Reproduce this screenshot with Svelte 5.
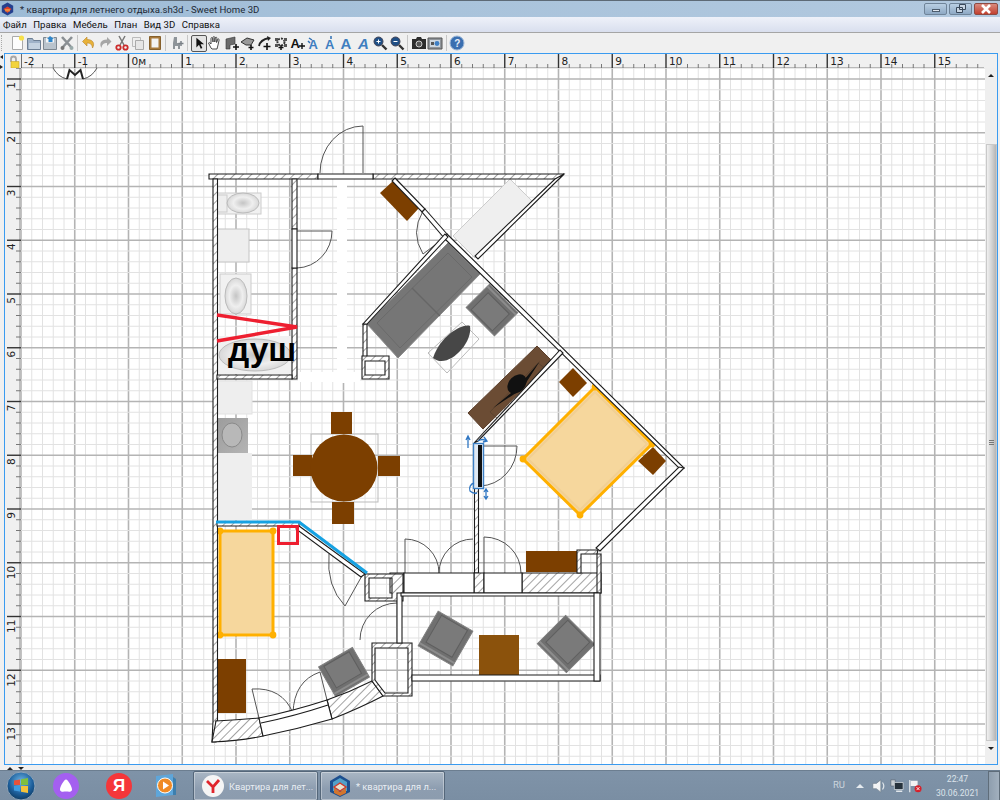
<script>
  // Sweet Home 3D window: title, menu, toolbar, plan canvas with rulers, then the Win7 taskbar.
  // The plan is a free canvas, so its svg viewBox simply uses page pixels.
  const M = 53.75;
  const STEP = M / 5;
  const X0 = 21; // x of -2 m
  const Y0 = 24.25; // y of 0 m

  const menus = ['Файл', 'Правка', 'Мебель', 'План', 'Вид 3D', 'Справка'];

  const gridX = Array.from({ length: 90 }, (_, i) => ({ p: X0 + i * STEP, major: i % 5 === 0 }));
  const gridY = Array.from({ length: 65 }, (_, i) => ({ p: Y0 + (i + 4) * STEP, major: (i + 4) % 5 === 0 }));

  const rulerX = Array.from({ length: 18 }, (_, i) => ({ p: X0 + i * M, label: i === 2 ? '0м' : String(i - 2) }));
  const rulerY = Array.from({ length: 13 }, (_, i) => ({ p: Y0 + (i + 1) * M, label: String(i + 1) }));

  const chairs = [
    { x: 445.5, y: 637.5, w: 40, h: 40, a: 30 },
    { x: 566, y: 643, w: 41, h: 40, a: 45 },
    { x: 344, y: 671, w: 39, h: 34, a: -30 },
    { x: 492, y: 309, w: 40, h: 33, a: 225 }
  ];
  const brown = [
    [331, 411, 21, 22],
    [293, 454, 19, 21],
    [378, 455, 22, 20],
    [332, 501, 22, 22],
    [526, 550, 51, 21],
    [217, 658, 29, 54]
  ];
</script>

<div class="app">
  <div class="title">
    <svg class="logo" viewBox="0 0 16 16">
      <path d="M8 0 15 4v8l-7 4-7-4V4z" fill="#25408f" />
      <path d="M8 5l5 3-5 5-5-5z" fill="#e0402a" />
      <path d="M5 8h6v3H5z" fill="#f08a3c" />
    </svg>
    <span class="title-text">* квартира для летнего отдыха.sh3d - Sweet Home 3D</span>
    <div class="winbtns">
      <div class="wb"><i class="min"></i></div>
      <div class="wb">
        <svg width="12" height="10" viewBox="0 0 12 10"><path d="M4.5.5h6v5h-6zM1.5 3.5h6v5h-6z" fill="#c9d6e3" stroke="#39485a" /></svg>
      </div>
      <div class="wb close">
        <svg width="12" height="10" viewBox="0 0 12 10"><path d="M2 1l8 8M10 1 2 9" stroke="#fff" stroke-width="2.6" /></svg>
      </div>
    </div>
  </div>

  <div class="menu">
    {#each menus as m}<span>{m}</span>{/each}
  </div>

  <div class="toolbar">
    <div class="grip"></div>
    <svg class="ic" viewBox="0 0 16 16"><path d="M3.5 1.5h8l2 2v11h-10z" fill="#fdfdfd" stroke="#aaa" /><circle cx="12.5" cy="3" r="2.6" fill="#f7e04a" /></svg>
    <svg class="ic" viewBox="0 0 16 16"><path d="M1.5 3.5h5l1 2h7v9h-13z" fill="#9fb2c8" stroke="#6d7f94" /><path d="M3 8h11v6H3z" fill="#c4d2e0" /></svg>
    <svg class="ic" viewBox="0 0 16 16"><path d="M1.5 2.5h13v12h-13z" fill="#b9c3cc" stroke="#7d8790" /><path d="M4 2.5h8v5H4z" fill="#f4f6f8" /><path d="M8 1l4 3-1.5 0v3h-4V4H5z" fill="#2f86c9" /></svg>
    <svg class="ic" viewBox="0 0 16 16"><path d="M3 2l10 11M13 2 3 13" stroke="#8b9094" stroke-width="2.6" /><circle cx="3.5" cy="13" r="2" fill="#777" /><circle cx="12.5" cy="13" r="2" fill="#9aa" /></svg>
    <i class="sep"></i>
    <svg class="ic" viewBox="0 0 16 16"><path d="M6 2 1.5 6.5 6 11V8c3 0 5 1 5.500 5 2.500-4 1-8.500-5.500-8.500z" fill="#e8b23a" stroke="#b9852a" stroke-width=".6" /></svg>
    <svg class="ic" viewBox="0 0 16 16"><path d="M10 2l4.500 4.500L10 11V8c-3 0-5 1-5.500 5C2 9 3.500 4.500 10 4.500z" fill="#a6a6a6" /></svg>
    <svg class="ic" viewBox="0 0 16 16"><path d="M5 1l5 9M11 1 6 10" stroke="#777" stroke-width="1.5" /><circle cx="4.500" cy="12.500" r="2.200" fill="none" stroke="#cc2b2b" stroke-width="1.800" /><circle cx="11.500" cy="12.500" r="2.200" fill="none" stroke="#cc2b2b" stroke-width="1.800" /></svg>
    <svg class="ic" viewBox="0 0 16 16"><path d="M2.500 2.500h8v9h-8z" fill="#eee" stroke="#bbb" /><path d="M5.500 5.500h8v9h-8z" fill="#e6e6e6" stroke="#aaa" /></svg>
    <svg class="ic" viewBox="0 0 16 16"><path d="M2.500 1.500h11v13h-11z" fill="#a87a3c" stroke="#86602c" /><path d="M4.500 3.500h7v9h-7z" fill="#f3f3f3" /></svg>
    <i class="sep"></i>
    <svg class="ic" viewBox="0 0 16 16"><path d="M5 2h3v6h3v6H9v-3H6v3H4V8z" fill="#8e9499" /><path d="M12 6v5M9.500 8.500h5" stroke="#7a8086" stroke-width="1.500" /></svg>
    <i class="sep"></i>
    <div class="active">
      <svg class="ic" viewBox="0 0 16 16"><path d="M5 2v11l3-3 2 4.500 1.800-.8-2-4.300h4z" fill="#111" /></svg>
    </div>
    <svg class="ic" viewBox="0 0 16 16"><path d="M4 13 1.500 8c.8-1 1.800 0 2.500 1V3.500c0-1.200 1.600-1.200 1.700 0L6 7V2.500c0-1.200 1.800-1.200 1.800 0V7l.4-4c.2-1.100 1.800-1 1.700.2L9.600 7.500l1-3c.4-1 1.800-.6 1.500.5L11 10l-1 4H5z" fill="#fff" stroke="#222" stroke-width=".8" /></svg>
    <svg class="ic" viewBox="0 0 16 16"><path d="M2 4l9-2v7l-5 1v4H2z" fill="#6b6b6b" stroke="#333" stroke-width=".6" /><path d="M12 9v6M9 12h6" stroke="#111" stroke-width="1.600" /></svg>
    <svg class="ic" viewBox="0 0 16 16"><path d="M1 7l6-4 7 2-3 5H6z" fill="#999" stroke="#333" stroke-width="1" /><path d="M11 10v5M8.500 12.500h5" stroke="#111" stroke-width="1.600" /></svg>
    <svg class="ic" viewBox="0 0 16 16"><path d="M2 11C3 6 7 4 12 3" fill="none" stroke="#222" stroke-width="1.800" /><path d="M10 1l4 2-3 3z" fill="#222" /><path d="M10 8v7M6.500 11.500h7" stroke="#111" stroke-width="1.600" /></svg>
    <svg class="ic" viewBox="0 0 16 16"><circle cx="8" cy="7" r="3.500" fill="none" stroke="#333" stroke-width="2" stroke-dasharray="2 1.200" /><path d="M2 3h3v3H2zM11 3h3v3h-3zM2 9h3v3H2zM11 9h3v3h-3z" fill="#555" /><path d="M8 10v5M5.500 12.500h5" stroke="#111" stroke-width="1.500" /></svg>
    <svg class="ic" viewBox="0 0 16 16"><text x="0.500" y="13" class="ta">A</text><path d="M12 8v6M9 11h6" stroke="#111" stroke-width="1.400" /></svg>
    <svg class="ic" viewBox="0 0 16 16"><text x="2.500" y="14" class="tb-a small">A</text><path d="M3 3l3 2M2 6l2 2" stroke="#2f6fb3" stroke-width="1.500" /></svg>
    <svg class="ic" viewBox="0 0 16 16"><text x="2" y="14" class="tb-a small">A</text><path d="M8 1v3" stroke="#2f6fb3" stroke-width="1.500" /></svg>
    <svg class="ic" viewBox="0 0 16 16"><text x="1.500" y="14" class="tb-a">A</text></svg>
    <svg class="ic" viewBox="0 0 16 16"><text x="2" y="14" class="tb-a ital">A</text></svg>
    <svg class="ic" viewBox="0 0 16 16"><circle cx="6.500" cy="6.500" r="4.500" fill="#1f4f86" stroke="#445" /><path d="M4.500 6.500h4M6.500 4.500v4" stroke="#fff" /><path d="M10 10l4.500 4.500" stroke="#333" stroke-width="2.400" /></svg>
    <svg class="ic" viewBox="0 0 16 16"><circle cx="6.500" cy="6.500" r="4.500" fill="#1f4f86" stroke="#445" /><path d="M4.500 6.500h4" stroke="#fff" /><path d="M10 10l4.500 4.500" stroke="#333" stroke-width="2.400" /></svg>
    <i class="sep"></i>
    <svg class="ic" viewBox="0 0 16 16"><path d="M1 4h4l1-2h4l1 2h4v10H1z" fill="#2c2c2c" /><circle cx="8" cy="9" r="3" fill="#555" stroke="#ccc" /></svg>
    <svg class="ic" viewBox="0 0 16 16"><path d="M1 3h14v11H1z" fill="#8f949a" stroke="#555" /><path d="M3 5h10v7H3z" fill="#cdd6df" /><circle cx="10" cy="8.500" r="2.400" fill="#3f7fc4" /><path d="M4 7h3v3H4z" fill="#555" /></svg>
    <i class="sep"></i>
    <svg class="ic" viewBox="0 0 16 16"><circle cx="8" cy="8" r="7" fill="#3a6fb0" stroke="#9db8d8" /><text x="5.200" y="12" class="help">?</text></svg>
  </div>

  <div class="row">
    <div class="divider">
      <span class="tri left"></span>
      <span class="tri right"></span>
    </div>
    <div class="work">
      <div class="corner">
        <svg width="15" height="14" viewBox="5 53 15 14">
          <path d="M11 61v-3a2.500 2.500 0 0 1 5 0v3" fill="none" stroke="#a6a6a6" stroke-width="1.800" />
          <path d="M11 60.500h8V67h-8z" fill="#f2d33c" stroke="#c8a828" stroke-width=".6" />
        </svg>
      </div>

      <svg class="ruler-x" viewBox="21 53 976 14" width="976" height="14">
        <path d="M21 66.500H984" stroke="#b9b9b9" />
        {#each gridX as g}
          {#if !g.major && g.p < 984}<path d="M{g.p} 63V67" stroke="#777" />{/if}
        {/each}
        {#each rulerX as r}
          <path d="M{r.p} 53V67" stroke="#333" stroke-width="1.400" />
          <text x={r.p + 3} y="64" class="rl">{r.label}</text>
        {/each}
      </svg>

      <svg class="ruler-y" viewBox="5 67 16 696" width="16" height="696">
        <rect x="19" y="67" width="2" height="696" fill="#bdbdbd" />
        {#each gridY as g}
          {#if !g.major}<path d="M16 {g.p}H21" stroke="#777" />{/if}
        {/each}
        {#each rulerY as r}
          <path d="M7 {r.p}H21" stroke="#333" stroke-width="1.400" />
          <text transform="translate(15 {r.p + 3}) rotate(-90)" text-anchor="end" class="rl">{r.label}</text>
        {/each}
      </svg>

      <svg class="plan" viewBox="21 67 964 696" width="964" height="696">
        <defs>
          <pattern id="hatch" width="6" height="6" patternUnits="userSpaceOnUse" patternTransform="rotate(-45)">
            <rect width="6" height="6" fill="#fff" />
            <path d="M0 0H6" stroke="#666" stroke-width="1.200" />
          </pattern>
          <radialGradient id="china">
            <stop offset="0" stop-color="#c4c4c4" />
            <stop offset=".6" stop-color="#efefef" />
            <stop offset="1" stop-color="#d8d8d8" />
          </radialGradient>
          <linearGradient id="steel" x1="0" y1="0" x2="1" y2="1">
            <stop offset="0" stop-color="#9c9c9c" />
            <stop offset="1" stop-color="#b4b4b4" />
          </linearGradient>
        </defs>

        <rect x="21" y="67" width="964" height="696" fill="#fff" />
        {#each gridX as g}
          <path d="M{g.p} 67V763" stroke={g.major ? '#b4b4b4' : '#e2e2e2'} stroke-width={g.major ? 1.600 : 1} />
        {/each}
        {#each gridY as g}
          <path d="M21 {g.p}H985" stroke={g.major ? '#b4b4b4' : '#e2e2e2'} stroke-width={g.major ? 1.600 : 1} />
        {/each}

        <!-- erased stripes -->
        <rect x="337" y="178" width="10" height="204" fill="#fff" />
        <rect x="298" y="371" width="62" height="10" fill="#fff" />

        <!-- door arcs -->
        <g class="door">
          <path d="M320 172A43 47 0 0 1 363 125V172" />
          <path d="M297 230H332A36 37 0 0 1 297 267" />
          <path d="M423 210Q410 232 423 253L447 235" />
          <path d="M480 445H517A38 40 0 0 1 480 485" />
          <path d="M329 553Q326 585 345 605L363 573" />
          <path d="M405 572V538A34 34 0 0 1 439 572" />
          <path d="M439 572A34 34 0 0 1 473 538" />
          <path d="M484 572V536A37 36 0 0 1 521 572" />
          <path d="M259 717 252 688Q282 686 293 712" />
          <path d="M293 712Q294 680 320 671L327 699" />
          <path d="M53 67Q58 76 67 78" />
          <path d="M97 67Q92 76 83 78" />
          <path d="M397 602A37 37 0 0 0 360 639" />
        </g>
        <path d="M67 78 69.500 69 75 74 80.500 69 83 78" fill="none" stroke="#222" stroke-width="2" />

        <!-- bathroom -->
        <rect x="217" y="192" width="44" height="21" fill="#f1f1f1" stroke="#ccc" />
        <rect x="217" y="194" width="10" height="17" fill="#eee" stroke="#ccc" />
        <ellipse cx="243" cy="202" rx="16" ry="10" fill="url(#china)" stroke="#bbb" />
        <rect x="217" y="228" width="32" height="33" fill="#eee" stroke="#c4c4c4" />
        <rect x="220" y="273" width="31" height="40" fill="#f1f1f1" stroke="#ccc" />
        <ellipse cx="236" cy="295" rx="11" ry="18" fill="url(#china)" stroke="#bbb" />
        <rect x="218" y="335" width="74" height="38" fill="#f1f1f1" />
        <ellipse cx="255" cy="354" rx="36" ry="16" fill="url(#china)" stroke="#bbb" />

        <!-- kitchen -->
        <rect x="217" y="380" width="35" height="33" fill="#eee" stroke="#e2e2e2" />
        <rect x="217" y="417" width="31" height="35" fill="url(#steel)" />
        <ellipse cx="232" cy="434" rx="10" ry="12" fill="#b8b8b8" stroke="#8a8a8a" />
        <rect x="217" y="452" width="35" height="67" fill="#eee" />

        <!-- dining set -->
        <rect x="311" y="433" width="67" height="68" fill="none" stroke="#bbb" />
        {#each brown as b}
          <rect x={b[0]} y={b[1]} width={b[2]} height={b[3]} fill="#7c3f00" />
        {/each}
        <circle cx="344" cy="467" r="33.500" fill="#7c3f00" />

        <!-- bedroom and living room, rotated pieces -->
        <path d="M380 192 393 180 419 207 407 220z" fill="#7c3f00" />
        <path d="M453 235 510 178 532 200 475 257z" fill="#efefef" stroke="#ccc" />
        <path d="M367 323 448 242 480 273 398 357z" fill="#767676" stroke="#8a8a8a" />
        <path d="M377 322 448 252 472 276 400 347z" fill="none" stroke="#6a6a6a" />
        <path d="M412 287 440 315" stroke="#666" stroke-width="1.500" />
        <path d="M428 352 462 321 479 338 447 372z" fill="none" stroke="#bbb" />
        <path d="M433 357C441 333 464 322 470 325 473 343 447 369 433 357z" fill="#474747" />
        <path d="M468 412 537 345 552 360 483 428z" fill="#6b4c34" stroke="#5b3e2a" />
        <path d="M490 411 538 362 546 368 498 418z" fill="none" stroke="#56402f" stroke-width=".8" />
        <path d="M493 407 517 387 540 360 522 388z" fill="#111" />
        <ellipse cx="517" cy="383" rx="11" ry="8" transform="rotate(-45 517 383)" fill="#111" />
        <path d="M559 381 573 367 587 382 573 396z" fill="#7c3f00" />
        <path d="M638 460 653 446 666 460 653 474z" fill="#7c3f00" />

        <!-- lower room table -->
        <rect x="479" y="634" width="40" height="40" fill="#8b520c" />

        {#each chairs as c}
          <g transform="translate({c.x} {c.y}) rotate({c.a})">
            <rect x={-c.w / 2} y={-c.h / 2} width={c.w} height={c.h} fill="#707070" stroke="#7e7e7e" />
            <rect x={-c.w / 2 + 5} y={-c.h / 2 + 2} width={c.w - 10} height={c.h - 9} fill="#7a7a7a" stroke="#5f5f5f" />
            <path d="M{-c.w / 2} {c.h / 2 - 3}H{c.w / 2}" stroke="#8c8c8c" stroke-width="2" />
          </g>
        {/each}

        <!-- beds -->
        <path d="M595 386 652 443 580 514 523 458z" fill="#f6d79d" stroke="#ffb000" stroke-width="3" />
        <path d="M595 391 647 443 580 509 528 458z" fill="none" stroke="#f1cf94" stroke-width="2" />
        <rect x="220" y="530" width="53" height="104" fill="#f6d79d" stroke="#ffb000" stroke-width="3" />
        {#each [[595, 386], [652, 443], [580, 514], [523, 458], [220, 530], [273, 530], [220, 634], [273, 634]] as d}
          <circle cx={d[0]} cy={d[1]} r="3.400" fill="#ffb000" />
        {/each}

        <!-- walls -->
        <g class="wall">
          <path d="M209 173H318V178H209z" />
          <path d="M373 173H564L559 178H373z" />
          <path d="M213 178H217.500V720H216V741H212L213 720z" />
          <path d="M292 178H297V228H292zM292 267H297V378H292z" />
          <path d="M217 374H292V378H217z" />
          <path d="M474.500 487H478.500V572H474.500z" />
          <path d="M217 521H299V525H217z" />
          <path d="M216 720Q238 719 259 717L263 735Q240 740 212 741z" />
          <path d="M327 699Q350 691 372 680L383 695Q360 707 332 718z" />
          <path d="M390 572H404V592H390z" />
          <path d="M474 572H484V592H474z" />
          <path d="M522 572H601V592H522z" />
          <path fill-rule="evenodd" d="M365 573H403V600H365zM369 577V597H392V577z" />
          <path fill-rule="evenodd" d="M372 642H412V695H383L372 680zM375 647V679L385 692H408V647z" />
          <path d="M363 323H367V356H363z" />
          <path fill-rule="evenodd" d="M362 355H389V378H362zM365 360V374H385V360z" />
          <path d="M577 549H598L597 553H581V572H577z" />
          <path d="M597 553H601V592H597z" />
        </g>
        <g class="wall plain">
          <path d="M318 173H373V178H318z" />
          <path d="M292 228H297V267H292z" />
          <path d="M259 717Q293 710 327 699L332 718Q298 728 263 735z" />
          <path d="M261 722Q295 715 328 704" />
          <path d="M404 572H474V592H404z" />
          <path d="M484 572H522V592H484z" />
          <path d="M564 173 478 258 475 255 555 178z" />
          <path d="M395 177 425 208 422 211 392 180z" />
          <path d="M447 233 684 467 680 468 445 238z" />
          <path d="M425 208 447 233 445 238 422 211z" />
          <path d="M448 236 367 323 363 323 445 233z" />
          <path d="M563 352 478 440 474 442 560 349z" />
          <path d="M684 467 600 550 596 547 679 466z" />
          <path d="M299 525 365 573 361 576 296 528z" />
          <path d="M397 592H402V642H397z" />
          <path d="M412 674H600V680H412z" />
          <path d="M401 592H598V595H401z" />
          <path d="M594 592H600V680H594z" />
        </g>

        <!-- annotations drawn over the plan -->
        <path d="M217 314 297 326 217 340" class="mark" />
        <path d="M216 521H299L367 572" fill="none" stroke="#17a2e2" stroke-width="3.200" />
        <rect x="278.500" y="525.500" width="19" height="17" fill="none" stroke="#ee1f30" stroke-width="3" />
        <text x="228" y="360" class="shower">душ</text>

        <!-- selected door with its handles -->
        <rect x="473.500" y="442.500" width="10" height="45" fill="#dfe9f4" stroke="#3c7fc4" stroke-width="1.400" />
        <rect x="478" y="444" width="4" height="42" fill="#111" />
        <g class="handles">
          <path d="M468 435V447M466 439 468 435 470 439" />
          <path d="M478 440Q483 437 486 440M484 436 487 440 483 441" />
          <path d="M474 482A6 6 0 0 0 470 490Q473 493 477 492" />
          <path d="M486 488V498M484 491 486 488 488 491M484 495 486 498 488 495" />
        </g>
      </svg>

      <div class="scroll">
        <span class="tri up"></span>
        <div class="thumb"><i></i><i></i><i></i></div>
        <span class="tri down"></span>
      </div>
    </div>
  </div>

  <div class="split">
    <span class="tri up"></span>
    <span class="tri down"></span>
  </div>

  <div class="taskbar">
    <svg class="orb" viewBox="0 0 30 30">
      <defs>
        <radialGradient id="orbfill" cx=".5" cy=".35" r=".7">
          <stop offset="0" stop-color="#6fb8e8" />
          <stop offset=".6" stop-color="#1d5f9c" />
          <stop offset="1" stop-color="#0d3558" />
        </radialGradient>
      </defs>
      <circle cx="15" cy="15" r="14" fill="url(#orbfill)" stroke="#8fa4b8" />
      <path d="M8 9.500 14 8.500V14H8z" fill="#e8523a" />
      <path d="M15 8.300 22 7V14H15z" fill="#7fbf3f" />
      <path d="M8 15H14V20.500L8 19.500z" fill="#3f9be0" />
      <path d="M15 15H22V22L15 20.700z" fill="#f5c23a" />
    </svg>
    <svg class="quick alice" viewBox="0 0 26 26">
      <circle cx="13" cy="13" r="13" fill="#a45ff0" />
      <path d="M13 6.500C15 6.500 19.500 14.500 19 17 18.500 19.500 15 18.500 13 18.500S7.500 19.500 7 17C6.500 14.500 11 6.500 13 6.500z" fill="#fff" />
    </svg>
    <div class="quick ya">Я</div>
    <svg class="quick media" viewBox="0 0 26 26">
      <path d="M3 3 20 1V22L3 24z" fill="#5ea6da" />
      <path d="M20 4 23 6V22L20 22z" fill="#3d7fae" />
      <circle cx="12" cy="12.500" r="7.500" fill="#f08a24" stroke="#fff" />
      <path d="M10 8.500 16 12.500 10 16.500z" fill="#fff" />
    </svg>

    <div class="task first">
      <svg class="task-ic" viewBox="0 0 22 22">
        <circle cx="11" cy="11" r="11" fill="#f5f5f5" />
        <path d="M5 6 11 12 17 5M11 12V18" fill="none" stroke="#e0252c" stroke-width="2.800" />
      </svg>
      <span>Квартира для лет...</span>
    </div>
    <div class="task">
      <svg class="task-ic" viewBox="0 0 22 22">
        <path d="M11 0 21 6V17L11 22 1 17V6z" fill="#1d4f8f" />
        <path d="M4 7 11 3 18 7V16H4z" fill="#52a0c8" />
        <path d="M5 12 11 8 17 12 11 16z" fill="#e8e2d0" stroke="#d23a2a" stroke-width="1.400" />
        <path d="M5 13 11 17 17 13V18L11 21 5 18z" fill="#d2752f" />
      </svg>
      <span>* квартира для л...</span>
    </div>

    <div class="tray">
      <span class="lang">RU</span>
      <span class="tray-up"></span>
      <svg class="tr-ic" viewBox="0 0 16 16"><path d="M1 5h4l5-4v14l-5-4H1z" fill="#f1f3f5" stroke="#66737f" stroke-width=".6" /><path d="M12 4q3 4 0 8" fill="none" stroke="#dfe5ea" stroke-width="1.400" /></svg>
      <svg class="tr-ic" viewBox="0 0 16 16"><path d="M1 1h5v7H1z" fill="#c8ced4" stroke="#4b5763" stroke-width=".6" /><path d="M5 4h10v8H5z" fill="#26323c" stroke="#dfe5ea" stroke-width=".8" /><path d="M7 14h7" stroke="#e8ecf0" stroke-width="1.600" /></svg>
      <svg class="tr-ic" viewBox="0 0 16 16"><path d="M2 1v14" stroke="#e4e8ec" stroke-width="1.400" /><path d="M3 2h8v6H3z" fill="#f3f3f3" /><circle cx="11.500" cy="11" r="4" fill="#d6202a" /><path d="M9.800 9.300l3.400 3.400M13.200 9.300l-3.400 3.400" stroke="#fff" /></svg>
      <div class="clock"><span>22:47</span><span>30.06.2021</span></div>
      <div class="desk"></div>
    </div>
  </div>
</div>

<style>
  :global(body) {
    margin: 0;
    background: #f0f0f0;
  }
  .app {
    width: 1000px;
    height: 800px;
    display: flex;
    flex-direction: column;
    overflow: hidden;
    font-family: Roboto, "Noto Sans", sans-serif;
  }
  .title {
    height: 16px;
    flex: none;
    display: flex;
    align-items: center;
    padding-left: 1px;
    border-top: 1px solid #5d6a76;
    background: linear-gradient(90deg, #9dbbd6, #a9c3db 45%, #b2c9df 100%);
  }
  .logo {
    width: 13px;
    height: 14px;
  }
  .title-text {
    margin-left: 6px;
    font-size: 9.6px;
    white-space: nowrap;
    color: #1d2935;
  }
  .winbtns {
    margin-left: auto;
    margin-right: 2px;
    display: flex;
    gap: 2px;
    align-self: flex-start;
  }
  .wb {
    width: 23px;
    height: 12px;
    margin-top: 2px;
    display: flex;
    align-items: center;
    justify-content: center;
    border: 1px solid #6f8499;
    border-radius: 2px;
    box-sizing: border-box;
    background: linear-gradient(#b9cfe3, #8ea9c4);
  }
  .wb.close {
    width: 24px;
    background: linear-gradient(#d98a7e, #c2402f);
    border-color: #8d4a42;
  }
  .wb .min {
    width: 8px;
    height: 3px;
    margin-top: 3px;
    background: #dfe6ee;
    border: 1px solid #4d5d6e;
    box-sizing: border-box;
  }
  .menu {
    height: 15px;
    flex: none;
    display: flex;
    gap: 6.500px;
    padding-left: 3px;
    align-items: center;
    font-size: 9.600px;
    color: #111;
    border-bottom: 1px solid #a5a5a5;
    background: linear-gradient(#eef1f9, #d9dfee);
  }
  .toolbar {
    height: 20px;
    flex: none;
    display: flex;
    align-items: center;
    background: #f0f0f0;
  }
  .grip {
    width: 8px;
    height: 16px;
    margin-left: 1px;
    border-left: 1px dotted #aaa;
    box-sizing: border-box;
  }
  .ic {
    width: 16px;
    height: 16px;
    margin: 0 0.25px;
    flex: none;
  }
  .sep {
    width: 1px;
    height: 16px;
    margin: 0 2.25px;
    background: #c6c6c6;
    flex: none;
  }
  .active {
    display: flex;
    width: 16.500px;
    height: 17px;
    align-items: center;
    justify-content: center;
    border: 1px solid #555;
    border-radius: 2px;
    background: #e4e4e4;
    flex: none;
    box-sizing: border-box;
  }
  .active .ic {
    width: 14px;
    height: 14px;
    margin: 0;
  }
  .ta {
    font: 700 13px "Liberation Sans", sans-serif;
    fill: #111;
  }
  .tb-a {
    font: 700 15px "Liberation Sans", sans-serif;
    fill: #3f7ec0;
  }
  .tb-a.small {
    font-size: 13px;
  }
  .tb-a.ital {
    font-style: italic;
  }
  .help {
    font: 700 10px "Liberation Sans", sans-serif;
    fill: #e8f0fa;
  }
  .row {
    height: 712px;
    flex: none;
    display: flex;
  }
  .divider {
    width: 4px;
    padding-top: 2px;
    display: flex;
    flex-direction: column;
    gap: 6px;
  }
  .work {
    height: 712px;
    width: 994px;
    box-sizing: border-box;
    border: 1px solid #3a9bf0;
    display: grid;
    grid-template-columns: 16px 964px 12px;
    grid-template-rows: 14px 696px;
    background: #f0f0f0;
  }
  .work svg {
    display: block;
  }
  .corner {
    grid-area: 1 / 1;
  }
  .ruler-x {
    grid-column: 2 / 4;
    grid-row: 1;
    width: 976px;
  }
  .ruler-y {
    grid-column: 1;
    grid-row: 2;
  }
  .plan {
    grid-column: 2;
    grid-row: 2;
  }
  .rl {
    font: 10.5px "DejaVu Sans", sans-serif;
    fill: #222;
  }
  .door path {
    fill: none;
    stroke: #555;
    stroke-width: 1;
  }
  .wall path {
    fill: url(#hatch);
    stroke: #1c1c1c;
    stroke-width: 1.100;
  }
  .wall.plain path {
    fill: #fff;
  }
  .mark {
    fill: none;
    stroke: #ee1f30;
    stroke-width: 3.400;
  }
  .shower {
    font: 700 33.500px "Liberation Sans", sans-serif;
    fill: #000;
  }
  .handles path {
    fill: none;
    stroke: #2f76c2;
    stroke-width: 1.300;
  }
  .scroll {
    grid-column: 3;
    grid-row: 2;
    display: flex;
    flex-direction: column;
    align-items: center;
    background: #efefef;
    padding-top: 6px;
    box-sizing: border-box;
  }
  .thumb {
    width: 11px;
    height: 597px;
    margin-top: 67px;
    display: flex;
    flex-direction: column;
    align-items: center;
    justify-content: center;
    gap: 1px;
    box-sizing: border-box;
    border: 1px solid #c9c9c9;
    background: linear-gradient(90deg, #f0f0f0, #d5d5d5 50%, #b5b5b5);
  }
  .thumb i {
    width: 5px;
    height: 1px;
    background: #777;
  }
  .tri {
    width: 0;
    height: 0;
    border-left: 3px solid transparent;
    border-right: 3px solid transparent;
  }
  .tri.up {
    border-bottom: 3px solid #222;
  }
  .tri.down {
    border-top: 3px solid #222;
  }
  .tri.left,
  .tri.right {
    border: 0;
    border-top: 2px solid transparent;
    border-bottom: 2px solid transparent;
  }
  .tri.left {
    border-right: 3px solid #222;
  }
  .tri.right {
    border-left: 3px solid #222;
  }
  .scroll .tri.down {
    margin-top: 6px;
  }
  .split {
    height: 5px;
    flex: none;
    display: flex;
    gap: 5px;
    align-items: flex-end;
    padding-left: 7px;
    background: #f0f0f0;
  }
  .taskbar {
    height: 31px;
    flex: none;
    display: flex;
    align-items: center;
    border-top: 1px solid #6c7e90;
    box-sizing: border-box;
    background: linear-gradient(#7f93a8, #7a8ea3);
    color: #e9eef3;
  }
  .orb {
    width: 30px;
    height: 30px;
    margin-left: 6px;
    flex: none;
  }
  .quick {
    width: 26px;
    height: 26px;
    flex: none;
  }
  .alice {
    margin-left: 17px;
  }
  .ya {
    margin-left: 27px;
    border-radius: 50%;
    background: #f5363a;
    color: #fff;
    display: flex;
    align-items: center;
    justify-content: center;
    font: 700 17px "Liberation Sans", sans-serif;
  }
  .media {
    margin-left: 21px;
  }
  .task {
    width: 125px;
    height: 30px;
    margin-left: 2px;
    display: flex;
    align-items: center;
    box-sizing: border-box;
    flex: none;
    padding-left: 8px;
    font-size: 9.300px;
    white-space: nowrap;
    border: 1px solid #55677a;
    border-radius: 2px;
    background: linear-gradient(#a9b6c4, #8d9db0 60%, #8c9cae);
    box-shadow: inset 0 0 0 1px rgba(255, 255, 255, 0.35);
  }
  .task.first {
    margin-left: 14px;
  }
  .task-ic {
    width: 22px;
    height: 22px;
    margin-right: 5px;
    flex: none;
  }
  .tray {
    margin-left: auto;
    height: 100%;
    display: flex;
    align-items: center;
  }
  .lang {
    font-size: 9.500px;
    color: #ccd5dd;
    margin-right: 11px;
    margin-top: -4px;
  }
  .tray-up {
    width: 0;
    height: 0;
    margin-right: 8px;
    border-left: 4px solid transparent;
    border-right: 4px solid transparent;
    border-bottom: 4px solid #e6ebef;
  }
  .tr-ic {
    width: 14px;
    height: 14px;
    margin-right: 4px;
  }
  .clock {
    width: 61px;
    margin-left: 1px;
    display: flex;
    flex-direction: column;
    align-items: center;
    font-size: 8.600px;
    line-height: 14px;
    color: #dce3ea;
  }
  .desk {
    width: 12px;
    height: 100%;
    box-sizing: border-box;
    border: 1px solid #5f6d7a;
    background: linear-gradient(90deg, #8e9eae, #a2b0be);
  }
</style>
